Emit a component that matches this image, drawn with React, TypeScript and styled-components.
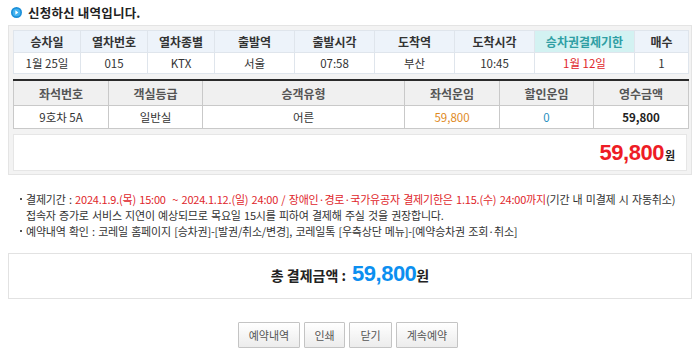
import React from "react";
import styled, { createGlobalStyle } from "styled-components";

const GlobalStyle = createGlobalStyle`
    body {
        margin: 0;
        background: #ffffff;
        font-family: "Noto Sans CJK KR", "Liberation Sans", sans-serif;
        font-size: 12px;
        color: #333333;
    }
`;

const trainHeaders = [
    "승차일",
    "열차번호",
    "열차종별",
    "출발역",
    "출발시각",
    "도착역",
    "도착시각",
    "승차권결제기한",
    "매수",
];
const trainWidths = [67, 67, 67, 80, 80, 80, 80, 100, 54];
const trainValues = ["1월 25일", "015", "KTX", "서울", "07:58", "부산", "10:45", "1월 12일", "1"];

const seatHeaders = ["좌석번호", "객실등급", "승객유형", "좌석운임", "할인운임", "영수금액"];
const seatWidths = [95, 94, 202, 95, 94, 95];

export default function App() {
    return (
        <Page>
            <GlobalStyle />
            <Title>
                <BulletIcon viewBox="0 0 12 12">
                    <circle cx="6" cy="6" r="6" fill="#1b8fd8" />
                    <circle cx="6" cy="6" r="4.2" fill="#43b3f0" />
                    <path d="M4.8 3.6 L8 6 L4.8 8.4 Z" fill="#ffffff" />
                </BulletIcon>
                신청하신 내역입니다.
            </Title>

            <Panel>
                <TrainTable>
                    <colgroup>
                        {trainWidths.map((w, i) => (
                            <col key={i} style={{ width: w }} />
                        ))}
                    </colgroup>
                    <thead>
                        <tr>
                            {trainHeaders.map((h, i) => (
                                <TrainHead key={h} $deadline={i === 7}>
                                    {h}
                                </TrainHead>
                            ))}
                        </tr>
                    </thead>
                    <tbody>
                        <tr>
                            {trainValues.map((v, i) => (
                                <TrainCell key={i} $deadline={i === 7}>
                                    {v}
                                </TrainCell>
                            ))}
                        </tr>
                    </tbody>
                </TrainTable>

                <SeatTable>
                    <colgroup>
                        {seatWidths.map((w, i) => (
                            <col key={i} style={{ width: w }} />
                        ))}
                    </colgroup>
                    <thead>
                        <tr>
                            {seatHeaders.map((h) => (
                                <SeatHead key={h}>{h}</SeatHead>
                            ))}
                        </tr>
                    </thead>
                    <tbody>
                        <tr>
                            <SeatCell>9호차 5A</SeatCell>
                            <SeatCell>일반실</SeatCell>
                            <SeatCell>어른</SeatCell>
                            <SeatCell $tone="orange">59,800</SeatCell>
                            <SeatCell $tone="blue">0</SeatCell>
                            <SeatCell $tone="bold">59,800</SeatCell>
                        </tr>
                    </tbody>
                </SeatTable>

                <SumBox>
                    <BigAmount $color="#ee1c25">59,800</BigAmount>
                    <Won>원</Won>
                </SumBox>
            </Panel>

            <Notes>
                <li>
                    결제기간 :{" "}
                    <Red>
                        2024.1.9.(목) 15:00 &nbsp;~ 2024.1.12.(일) 24:00 / 장애인·경로·국가유공자
                        결제기한은 1.15.(수) 24:00까지
                    </Red>
                    (기간 내 미결제 시 자동취소)
                    <br />
                    접속자 증가로 서비스 지연이 예상되므로 목요일 15시를 피하여 결제해 주실 것을
                    권장합니다.
                </li>
                <li>
                    예약내역 확인 : 코레일 홈페이지 [승차권]-[발권/취소/변경], 코레일톡
                    [우측상단 메뉴]-[예약승차권 조회·취소]
                </li>
            </Notes>

            <TotalBox>
                <TotalLabel>총 결제금액 :</TotalLabel>
                <BigAmount $color="#0c8ff0">59,800</BigAmount>
                <TotalWon>원</TotalWon>
            </TotalBox>

            <ButtonRow>
                <Button $width={62}>예약내역</Button>
                <Button $width={41}>인쇄</Button>
                <Button $width={43}>닫기</Button>
                <Button $width={62}>계속예약</Button>
            </ButtonRow>
        </Page>
    );
}

const Page = styled.div`
    width: 700px;
    padding: 5px 8px 0;
    box-sizing: border-box;
`;

const Title = styled.h2`
    display: flex;
    align-items: center;
    gap: 6px;
    margin: 0 0 6px 3px;
    height: 14px;
    font-size: 12.5px;
    font-weight: bold;
    color: #222222;
    letter-spacing: 0.2px;
`;

const BulletIcon = styled.svg`
    width: 11px;
    height: 11px;
`;

const Panel = styled.div`
    background: #f3f3f3;
    border: 1px solid #e4e4e4;
    padding: 4px 4px 3px;
`;

const TrainTable = styled.table`
    width: 675px;
    border-collapse: collapse;
    table-layout: fixed;
    background: #ffffff;
`;

const TrainHead = styled.th<{ $deadline?: boolean }>`
    height: 21px;
    padding: 0;
    font-size: 12px;
    font-weight: bold;
    color: ${(p) => (p.$deadline ? "#2f9fa4" : "#333333")};
    background: ${(p) => (p.$deadline ? "#d3f2f2" : "#edf3fa")};
    border: 1px solid #dfe5ec;
`;

const TrainCell = styled.td<{ $deadline?: boolean }>`
    height: 20px;
    padding: 0;
    text-align: center;
    font-size: 11.5px;
    color: ${(p) => (p.$deadline ? "#e0262b" : "#333333")};
    border: 1px solid #dfe5ec;
`;

const SeatTable = styled.table`
    width: 675px;
    margin-top: 5px;
    border-collapse: collapse;
    table-layout: fixed;
    background: #ffffff;
    border-top: 2px solid #2a2a2a;
`;

const SeatHead = styled.th`
    height: 24px;
    padding: 0;
    font-size: 12px;
    font-weight: bold;
    color: #555555;
    background: #f0f0f0;
    border: 1px solid #c9c9c9;
    border-top: none;
`;

const toneColor = {
    orange: "#e08a1e",
    blue: "#1f8fc0",
    bold: "#222222",
};

const SeatCell = styled.td<{ $tone?: "orange" | "blue" | "bold" }>`
    height: 22px;
    padding: 0;
    text-align: center;
    font-size: 11.5px;
    font-weight: ${(p) => (p.$tone === "bold" ? "bold" : "normal")};
    color: ${(p) => (p.$tone ? toneColor[p.$tone] : "#333333")};
    border: 1px solid #c9c9c9;
`;

const SumBox = styled.div`
    margin-top: 5px;
    height: 37px;
    background: #ffffff;
    border: 1px solid #e6e6e6;
    display: flex;
    justify-content: flex-end;
    align-items: baseline;
    padding: 5px 11px 0 0;
    box-sizing: border-box;
`;

const BigAmount = styled.span<{ $color: string }>`
    font-family: "Liberation Sans", Arial, sans-serif;
    font-weight: bold;
    font-size: 22px;
    letter-spacing: -0.5px;
    color: ${(p) => p.$color};
`;

const Won = styled.span`
    font-size: 11px;
    font-weight: bold;
    color: #222222;
    margin-left: 1px;
`;

const Notes = styled.ul`
    margin: 16px 0 0;
    padding: 0 0 0 18px;
    font-size: 11px;
    letter-spacing: -0.2px;
    word-spacing: 1px;
    line-height: 16px;
    color: #333333;
    list-style: none;
    white-space: nowrap;

    li {
        position: relative;
    }

    li::before {
        content: "";
        position: absolute;
        left: -6px;
        top: 7px;
        width: 2px;
        height: 2px;
        background: #555555;
    }
`;

const Red = styled.span`
    color: #e0262b;
`;

const TotalBox = styled.div`
    margin-top: 14px;
    height: 46px;
    border: 1px solid #e2e2e2;
    display: flex;
    justify-content: center;
    align-items: baseline;
    padding-top: 7px;
    box-sizing: border-box;
`;

const TotalLabel = styled.span`
    font-size: 14px;
    font-weight: bold;
    color: #222222;
    margin-right: 6px;
`;

const TotalWon = styled.span`
    font-size: 14px;
    font-weight: bold;
    color: #222222;
`;

const ButtonRow = styled.div`
    display: flex;
    justify-content: center;
    gap: 4px;
    margin-top: 23px;
    padding-right: 4px;
`;

const Button = styled.button<{ $width: number }>`
    width: ${(p) => p.$width}px;
    height: 26px;
    padding: 0;
    font-family: "Noto Sans CJK KR", sans-serif;
    font-size: 11px;
    color: #555555;
    background: linear-gradient(#ffffff, #ececec);
    border: 1px solid #c4c4c4;
    border-radius: 1px;
    cursor: pointer;
`;
